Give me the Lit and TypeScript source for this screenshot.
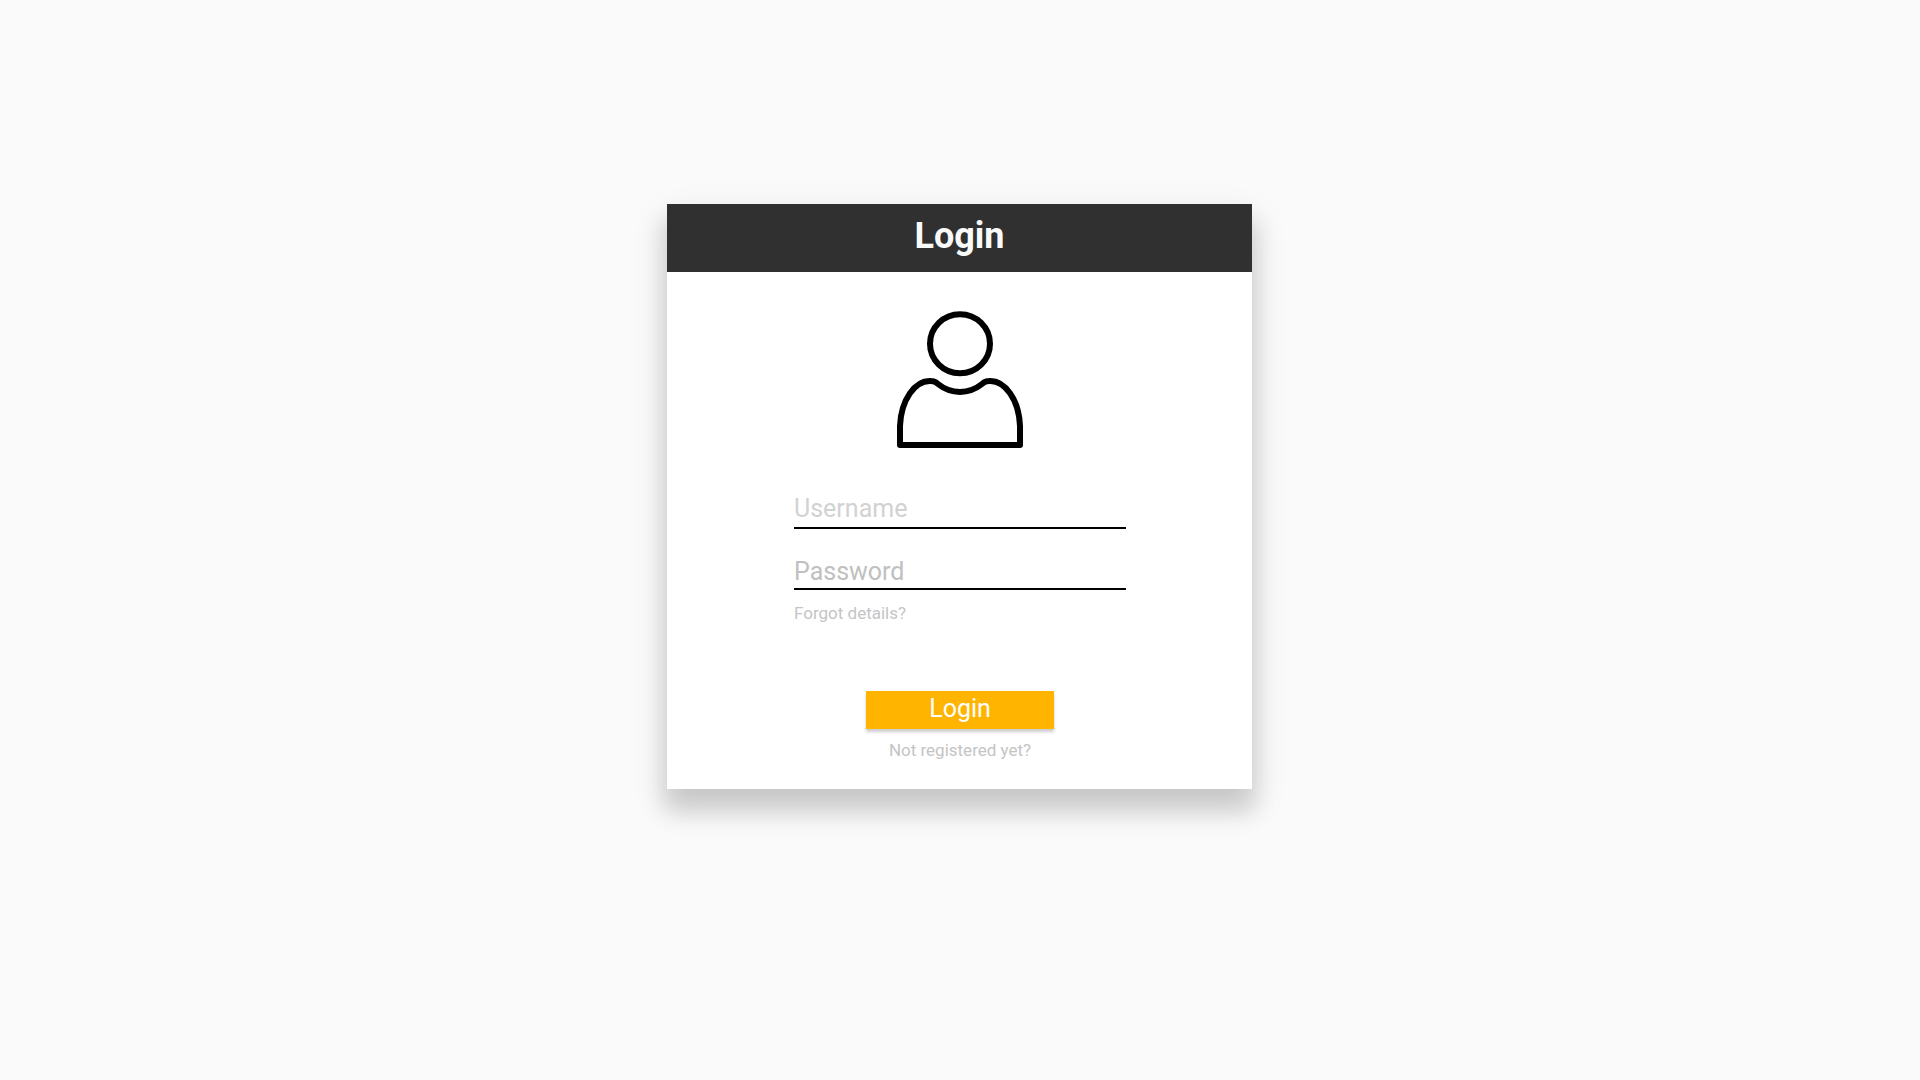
import { LitElement, html, css } from "lit";
import { customElement } from "lit/decorators.js";

@customElement("app-root")
export class AppRoot extends LitElement {
  static styles = css`
    :host {
      display: flex;
      flex-direction: column;
      align-items: center;
      box-sizing: border-box;
      min-height: 100vh;
      padding: 204px 17px 32px 16px;
      background: #fafafa;
      font-family: Roboto, "Liberation Sans", sans-serif;
    }
    .card {
      width: 100%;
      max-width: 585px;
      background: #fff;
      box-shadow: 0 20px 22px 3px rgba(0, 0, 0, 0.12), 0 15px 32px 3px rgba(0, 0, 0, 0.1);
    }
    .title {
      margin: 0;
      padding-bottom: 4px;
      background: #303030;
      color: #fafafa;
      font-size: 36px;
      font-weight: 700;
      line-height: 64px;
      text-align: center;
    }
    .form {
      display: flex;
      flex-direction: column;
      align-items: center;
      padding: 38px 16px 29px 17px;
    }
    .avatar {
      width: 128px;
      height: 140px;
      fill: none;
      stroke: #000;
      stroke-width: 6;
      stroke-linejoin: round;
    }
    .fields {
      display: flex;
      flex-direction: column;
      align-items: flex-start;
      width: 100%;
      max-width: 332px;
      margin-top: 44px;
    }
    .field {
      box-sizing: border-box;
      width: 100%;
      height: 35px;
      padding: 0 0 5px;
      border: 0;
      border-bottom: 2px solid #000;
      border-radius: 0;
      outline: none;
      background: transparent;
      color: #303030;
      font: 400 25px/28px Roboto, "Liberation Sans", sans-serif;
    }
    .field::placeholder {
      color: #d2d2d2;
      opacity: 1;
    }
    .password {
      height: 33px;
      margin-top: 28px;
      padding-bottom: 3px;
    }
    .password::placeholder {
      color: #c0c0c0;
    }
    .link {
      color: #c4c4c4;
      font-size: 17px;
      line-height: 20px;
      text-decoration: none;
    }
    .forgot {
      margin-top: 13px;
    }
    .register {
      margin-top: 11px;
    }
    .submit {
      width: 188px;
      height: 38px;
      margin-top: 68px;
      padding: 0 0 2px;
      border: 0;
      background: #ffb400;
      box-shadow: 0 3px 3px rgba(0, 0, 0, 0.2);
      color: #fff;
      font: 400 25px/36px Roboto, "Liberation Sans", sans-serif;
      cursor: pointer;
    }
  `;

  render() {
    return html`
      <main class="card">
        <h1 class="title">Login</h1>
        <form class="form" @submit=${(e: Event) => e.preventDefault()}>
          <svg class="avatar" viewBox="16 10 128 140" aria-hidden="true">
            <ellipse cx="80" cy="43.7" rx="30" ry="29.5" />
            <path
              d="M20 145V126C21 100 35 80 51 81C54 81 56 82 58 84C71 94.5 89 94.5 102 84C104 82 106 81 109 81C125 80 139 100 140 126V145Z"
            />
          </svg>
          <div class="fields">
            <input class="field" type="text" placeholder="Username" aria-label="Username" autocomplete="username" />
            <input class="field password" type="password" placeholder="Password" aria-label="Password" autocomplete="current-password" />
            <a class="link forgot" href="#forgot">Forgot details?</a>
          </div>
          <button class="submit" type="submit">Login</button>
          <a class="link register" href="#register">Not registered yet?</a>
        </form>
      </main>
    `;
  }
}
